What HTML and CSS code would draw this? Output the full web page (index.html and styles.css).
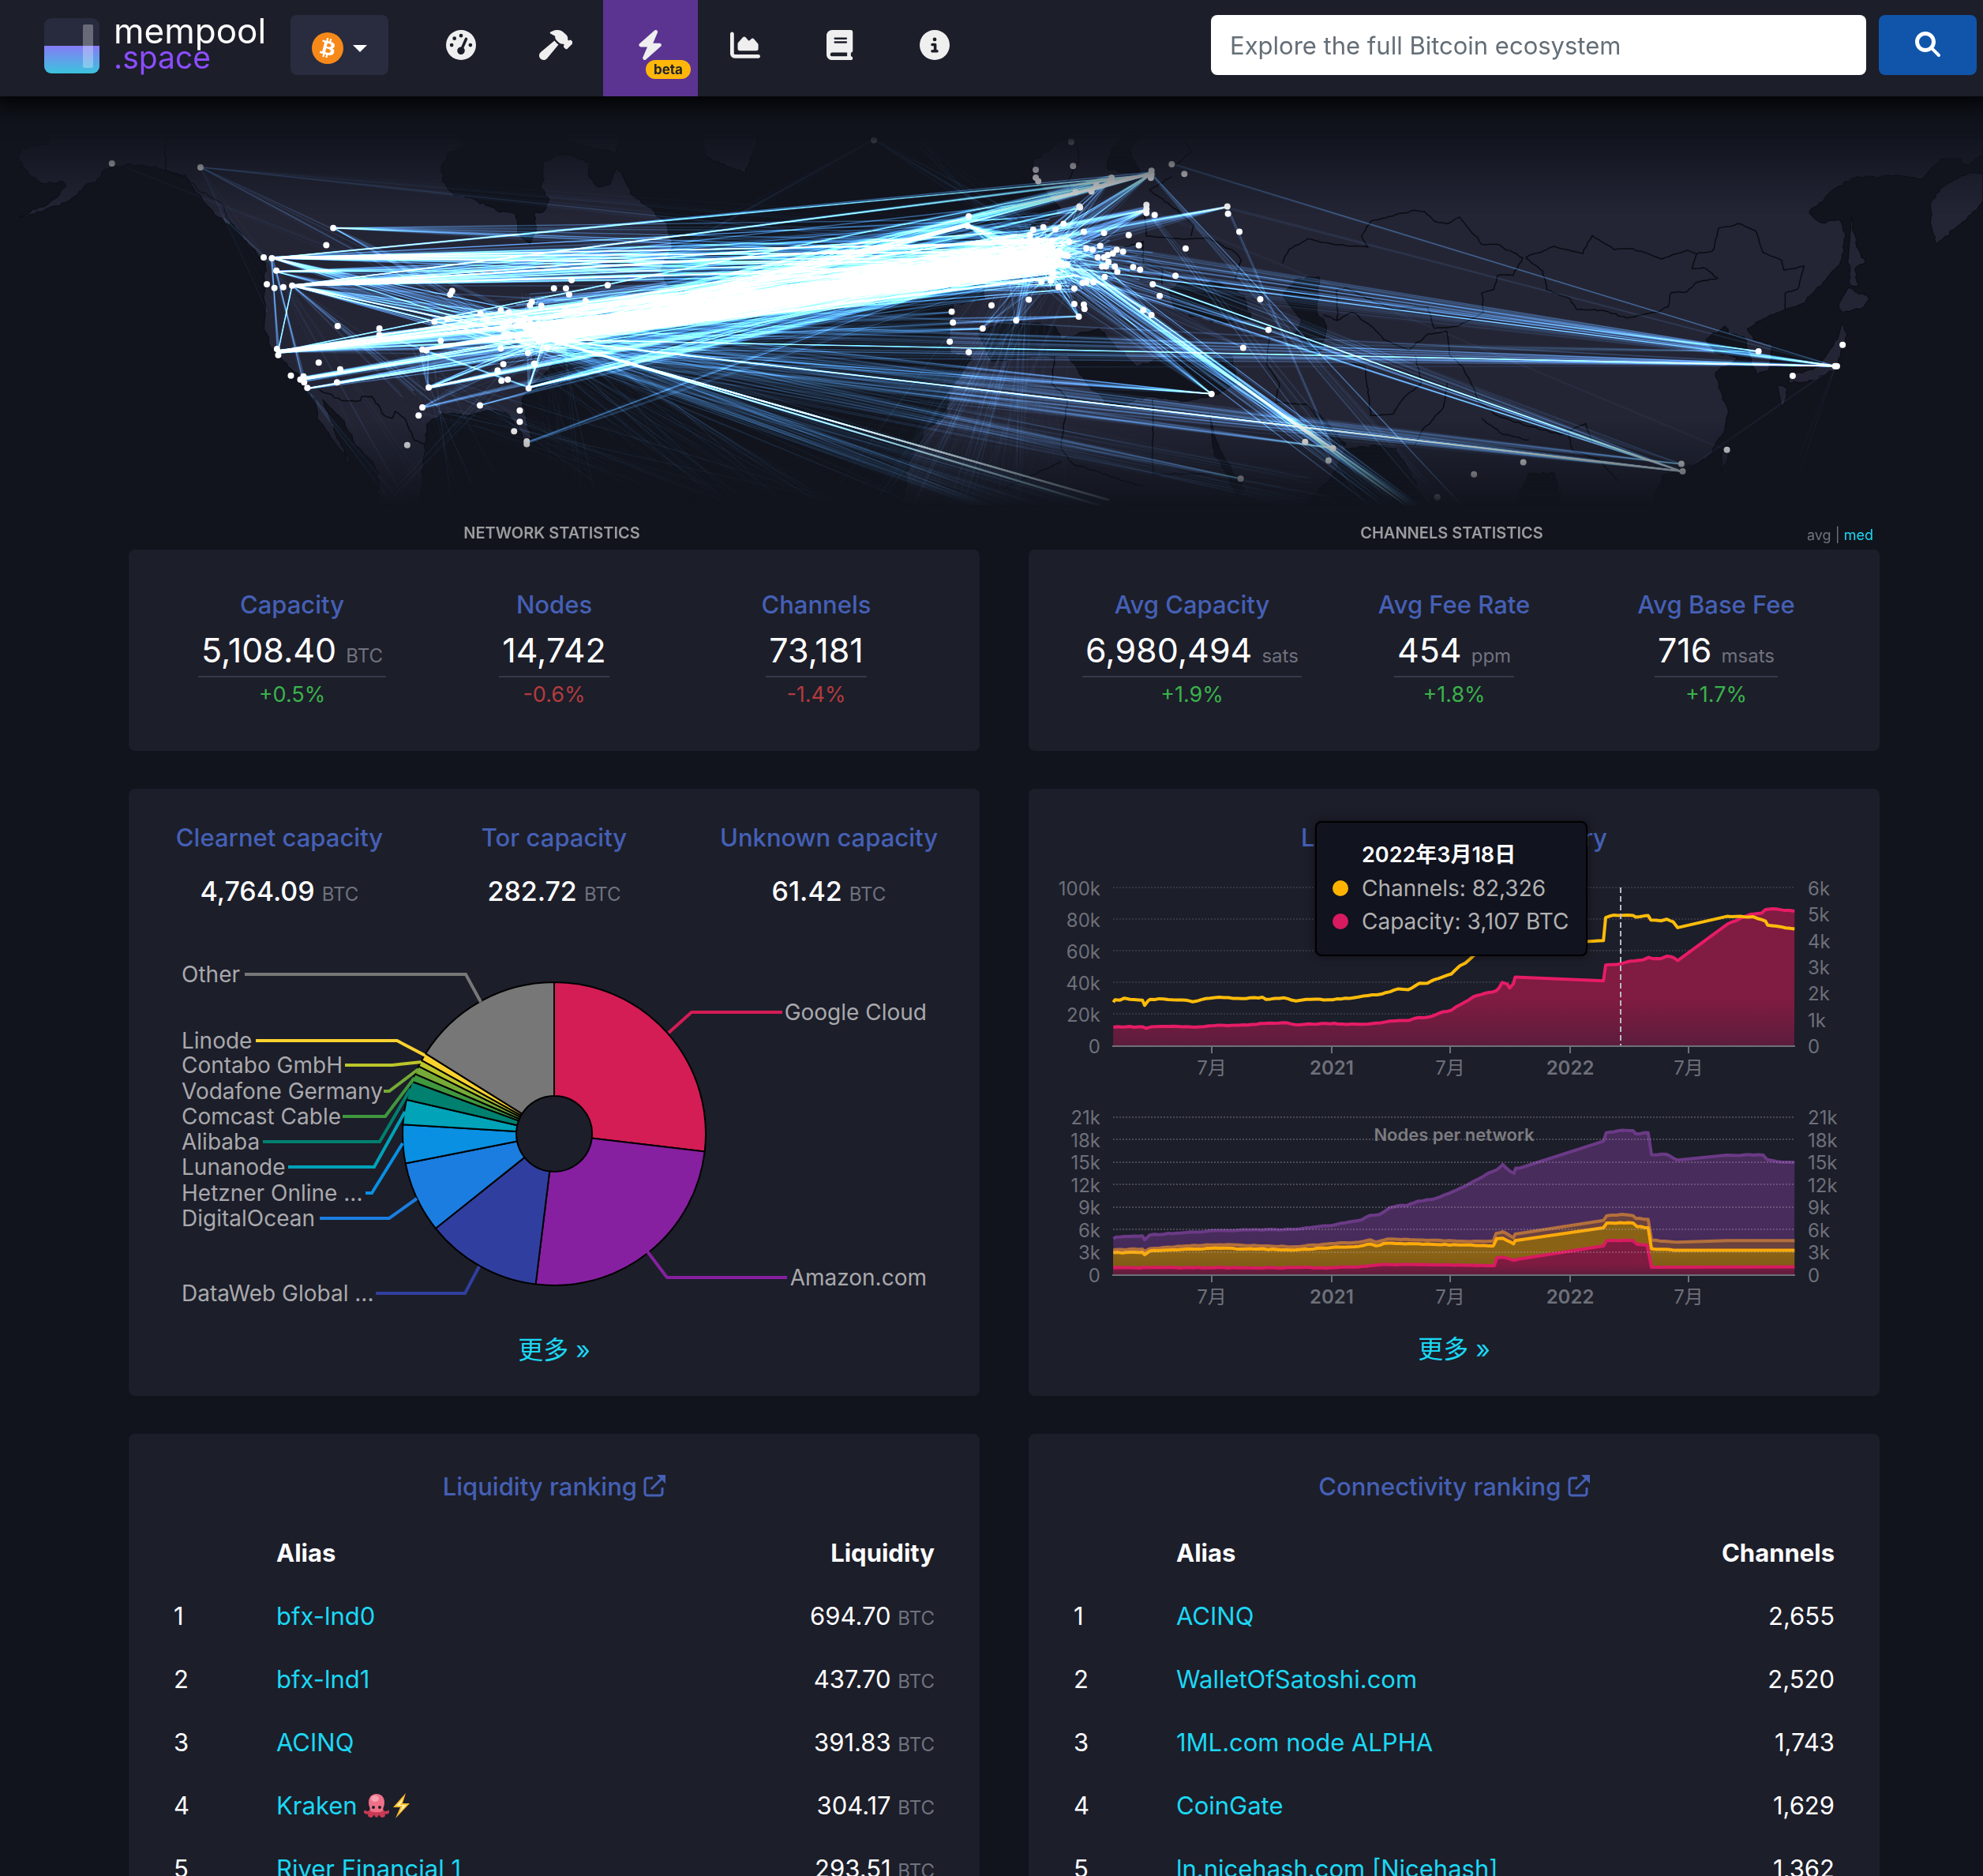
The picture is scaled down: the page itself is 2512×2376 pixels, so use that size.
FILE: index.html
```html
<!DOCTYPE html>
<html lang="zh">
<head>
<meta charset="utf-8">
<title>mempool.space - Lightning</title>
<meta name="viewport" content="width=device-width, initial-scale=1">
<link rel="stylesheet" href="styles.css">
</head>
<body>
<header class="topbar">
  <a class="brand" href="#">
    <svg class="brand-mark" viewBox="0 0 70 70" aria-hidden="true">
      <defs>
        <linearGradient id="fill" x1="0" y1="0" x2="0" y2="1"><stop offset="0" stop-color="#857cf6"/><stop offset="1" stop-color="#3bc4dd"/></linearGradient>
        <clipPath id="round"><rect width="70" height="70" rx="9"/></clipPath>
      </defs>
      <g clip-path="url(#round)">
        <rect width="70" height="70" fill="#272b3d"/>
        <rect y="35" width="70" height="35" fill="url(#fill)"/>
        <rect x="49" y="8" width="13" height="55" rx="2" fill="#fff" opacity=".3"/>
      </g>
    </svg>
    <span class="brand-text"><span>mempool</span><span class="brand-space">.space</span></span>
  </a>
  <button class="network" type="button" aria-label="Network">
    <svg class="coin" viewBox="0 0 64 64" aria-hidden="true"><circle cx="32" cy="32" r="32" fill="#f7891a"/><path fill="#fff" d="M46.11 27.44c.636-4.258-2.606-6.547-7.039-8.074l1.438-5.768-3.512-.875-1.4 5.616c-.922-.23-1.87-.447-2.812-.662l1.41-5.653-3.509-.875-1.439 5.766c-.764-.174-1.514-.346-2.242-.527l.004-.018-4.842-1.209-.934 3.75s2.605.597 2.55.634c1.422.355 1.68 1.296 1.636 2.042l-1.638 6.571c.098.025.225.061.365.117l-.37-.092-2.297 9.205c-.174.432-.615 1.08-1.609.834.035.051-2.552-.637-2.552-.637l-1.743 4.02 4.57 1.139c.85.213 1.683.436 2.502.646l-1.453 5.835 3.507.875 1.44-5.772c.957.26 1.887.5 2.797.726L27.504 50.8l3.511.875 1.453-5.823c5.987 1.133 10.49.676 12.383-4.738 1.527-4.36-.075-6.875-3.225-8.516 2.294-.53 4.022-2.04 4.483-5.157zM38.087 38.69c-1.086 4.36-8.426 2.004-10.807 1.412l1.928-7.729c2.38.594 10.011 1.77 8.88 6.317zm1.085-11.312c-.99 3.966-7.1 1.951-9.083 1.457l1.748-7.01c1.983.494 8.367 1.416 7.335 5.553z"/></svg>
    <span class="caret"></span>
  </button>
  <nav class="menu">
    <a href="#" aria-label="Dashboard"><svg viewBox="0 0 512 512"><path d="M0 256a256 256 0 1 1 512 0A256 256 0 1 1 0 256zM288 96a32 32 0 1 0 -64 0 32 32 0 1 0 64 0zM256 416c35.3 0 64-28.7 64-64c0-17.4-6.9-33.1-18.1-44.6L366 161.7c5.3-12.1-.2-26.3-12.3-31.6s-26.3 .2-31.6 12.3L257.9 288c-.6 0-1.3 0-1.9 0c-35.3 0-64 28.7-64 64s28.7 64 64 64zM176 144a32 32 0 1 0 -64 0 32 32 0 1 0 64 0zM96 288a32 32 0 1 0 0-64 32 32 0 1 0 0 64zm352-32a32 32 0 1 0 -64 0 32 32 0 1 0 64 0z"/></svg></a>
    <a href="#" aria-label="Mining"><svg viewBox="0 0 576 512"><path d="M413.500 237.500c-28.200 4.800-58.200-3.600-80-25.400l-38.100-38.100C280.400 159 272 138.800 272 117.600V105.500L192.300 62c-5.300-2.900-8.600-8.600-8.300-14.700s3.900-11.500 9.500-14l47.200-21C259.100 4.200 279 0 299.200 0h18.100c36.700 0 72 14 98.700 39.100l44.600 42c24.200 22.800 33.200 55.700 26.600 86L503 183l8-8c9.400-9.400 24.600-9.400 33.900 0l24 24c9.400 9.400 9.400 24.600 0 33.900l-88 88c-9.400 9.400-24.600 9.400-33.900 0l-24-24c-9.400-9.400-9.400-24.600 0-33.900l8-8-17.500-17.500zM27.400 377.100L260.900 182.600c3.500 4.900 7.500 9.600 11.800 14l38.100 38.100c6 6 12.400 11.200 19.200 15.700L134.900 484.600c-14.500 17.400-36 27.400-58.600 27.400C34.100 512 0 477.800 0 435.700c0-22.600 10.100-44.100 27.400-58.600z"/></svg></a>
    <a href="#" class="active" aria-label="Lightning"><svg viewBox="0 0 448 512"><path d="M349.400 44.600c5.900-13.700 1.500-29.700-10.600-38.500s-28.600-8-39.900 1.800l-256 224c-10 8.800-13.600 22.900-8.900 35.300S50.700 288 64 288H175.500L98.600 467.400c-5.900 13.700-1.500 29.700 10.600 38.500s28.600 8 39.900-1.800l256-224c10-8.800 13.600-22.900 8.900-35.300s-16.600-20.700-30-20.700H272.500L349.400 44.600z"/></svg><span class="badge">beta</span></a>
    <a href="#" aria-label="Graphs"><svg viewBox="0 0 512 512"><path d="M64 64c0-17.700-14.300-32-32-32S0 46.300 0 64V400c0 44.200 35.800 80 80 80H480c17.700 0 32-14.300 32-32s-14.300-32-32-32H80c-8.800 0-16-7.200-16-16V64zm96 288H448c17.700 0 32-14.300 32-32V251.800c0-7.600-2.700-15-7.700-20.800l-65.800-76.800c-12.100-14.200-33.700-15-46.900-1.800l-21 21c-10 10-26.400 9.200-35.400-1.600l-39.200-47c-12.600-15.100-35.700-15.400-48.700-.6L135.900 215c-5.100 5.800-7.900 13.300-7.900 21.100v84c0 17.700 14.300 32 32 32z"/></svg></a>
    <a href="#" aria-label="Docs"><svg viewBox="0 0 448 512"><path d="M96 0C43 0 0 43 0 96V416c0 53 43 96 96 96H384h32c17.700 0 32-14.300 32-32s-14.300-32-32-32V384c17.700 0 32-14.300 32-32V32c0-17.700-14.300-32-32-32H384 96zm0 384H352v64H96c-17.700 0-32-14.300-32-32s14.300-32 32-32zm32-240c0-8.800 7.200-16 16-16H336c8.800 0 16 7.200 16 16s-7.200 16-16 16H144c-8.800 0-16-7.200-16-16zm16 48H336c8.800 0 16 7.200 16 16s-7.200 16-16 16H144c-8.800 0-16-7.200-16-16s7.200-16 16-16z"/></svg></a>
    <a href="#" aria-label="About"><svg viewBox="0 0 512 512"><path d="M256 512A256 256 0 1 0 256 0a256 256 0 1 0 0 512zM216 336h24V272H216c-13.300 0-24-10.700-24-24s10.700-24 24-24h48c13.300 0 24 10.700 24 24v88h8c13.300 0 24 10.700 24 24s-10.700 24-24 24H216c-13.300 0-24-10.700-24-24s10.700-24 24-24zm40-208a32 32 0 1 1 0 64 32 32 0 1 1 0-64z"/></svg></a>
  </nav>
  <form class="search">
    <input type="text" placeholder="Explore the full Bitcoin ecosystem" aria-label="Explore the full Bitcoin ecosystem">
    <button type="button" aria-label="Search"><svg viewBox="0 0 512 512"><path d="M416 208c0 45.900-14.900 88.300-40 122.700L502.600 457.400c12.500 12.500 12.500 32.800 0 45.300s-32.800 12.500-45.300 0L330.700 376c-34.400 25.200-76.800 40-122.700 40C93.100 416 0 322.900 0 208S93.100 0 208 0S416 93.100 416 208zM208 336a128 128 0 1 0 0-256 128 128 0 1 0 0 256z"/></svg></button>
  </form>
</header>

<canvas class="map" id="map" role="img" aria-label="Lightning channels world map"></canvas>

<main class="dashboard">
  <section class="column-block">
    <div class="caption"><h2>NETWORK STATISTICS</h2></div>
    <div class="card stats">
      <div class="stat"><h3>Capacity</h3><p class="value">5,108.40 <small>BTC</small></p><p class="up">+0.5%</p></div>
      <div class="stat"><h3>Nodes</h3><p class="value">14,742</p><p class="down">-0.6%</p></div>
      <div class="stat"><h3>Channels</h3><p class="value">73,181</p><p class="down">-1.4%</p></div>
    </div>
  </section>
  <section class="column-block">
    <div class="caption"><h2>CHANNELS STATISTICS</h2><span class="toggle">avg | <a href="#">med</a></span></div>
    <div class="card stats">
      <div class="stat"><h3>Avg Capacity</h3><p class="value">6,980,494 <small>sats</small></p><p class="up">+1.9%</p></div>
      <div class="stat"><h3>Avg Fee Rate</h3><p class="value">454 <small>ppm</small></p><p class="up">+1.8%</p></div>
      <div class="stat"><h3>Avg Base Fee</h3><p class="value">716 <small>msats</small></p><p class="up">+1.7%</p></div>
    </div>
  </section>

  <section class="card charts">
    <div class="shares">
      <div class="stat"><h3>Clearnet capacity</h3><p class="amount">4,764.09 <small>BTC</small></p></div>
      <div class="stat"><h3>Tor capacity</h3><p class="amount">282.72 <small>BTC</small></p></div>
      <div class="stat"><h3>Unknown capacity</h3><p class="amount">61.42 <small>BTC</small></p></div>
    </div>
    <svg class="pie" id="pie" viewBox="0 0 1078 524" role="img" aria-label="Capacity per ISP"></svg>
    <a class="more" href="#">更多 »</a>
  </section>

  <section class="card charts">
    <h3>Lightning Network History</h3>
    <svg class="history" id="history" viewBox="0 0 1078 587" role="img" aria-label="Lightning Network History"></svg>
    <a class="more" href="#">更多 »</a>
    <div class="tooltip">
      <strong>2022年3月18日</strong>
      <span class="series"><i class="dot channels"></i>Channels: 82,326</span>
      <span class="series"><i class="dot capacity"></i>Capacity: 3,107 BTC</span>
    </div>
  </section>

  <section class="card ranking">
    <h3><a href="#">Liquidity ranking <svg class="ext" viewBox="0 0 28 28"><path d="M12 4H5a3 3 0 0 0-3 3v16a3 3 0 0 0 3 3h16a3 3 0 0 0 3-3v-7M10 18 25 3" fill="none" stroke="currentColor" stroke-width="3"/><path d="M17 0h11v11z" fill="currentColor"/></svg></a></h3>
    <table>
      <thead><tr><th></th><th>Alias</th><th>Liquidity</th></tr></thead>
      <tbody>
        <tr><td>1</td><td><a href="#">bfx-lnd0</a></td><td>694.70 <small>BTC</small></td></tr>
        <tr><td>2</td><td><a href="#">bfx-lnd1</a></td><td>437.70 <small>BTC</small></td></tr>
        <tr><td>3</td><td><a href="#">ACINQ</a></td><td>391.83 <small>BTC</small></td></tr>
        <tr><td>4</td><td><a href="#">Kraken <svg class="emoji" viewBox="0 0 32 32" role="img" aria-label="octopus"><path fill="#c93a55" d="M8 19c-1 4-3 5-6 3-2-1-3 2-1 4 2 1 4 1 5 0-2 2-1 4 2 5 3 0 4-2 5-4 1 5 5 5 6 0 1 2 2 4 5 4 3-1 4-3 2-5 1 1 3 1 5 0 2-2 1-5-1-4-3 2-5 1-6-3z"/><path fill="#ee7189" d="M16 1c7 0 10 5 10 11 0 5-2 6-2 10 0 3-16 3-16 0 0-4-2-5-2-10C6 6 9 1 16 1z"/><ellipse cx="14" cy="7" rx="5" ry="4" fill="#f7a0b0"/><circle cx="12" cy="18" r="2" fill="#222"/><circle cx="20" cy="18" r="2" fill="#222"/></svg><svg class="emoji" viewBox="0 0 32 32" role="img" aria-label="bolt"><path fill="#fdb92e" d="M21 0 5 18h9L8 32l18-19h-9z"/><path fill="#fff1a8" d="M18 6 9 16h8l-4 9 9-10h-8z"/></svg></a></td><td>304.17 <small>BTC</small></td></tr>
        <tr><td>5</td><td><a href="#">River Financial 1</a></td><td>293.51 <small>BTC</small></td></tr>
      </tbody>
    </table>
  </section>

  <section class="card ranking">
    <h3><a href="#">Connectivity ranking <svg class="ext" viewBox="0 0 28 28"><path d="M12 4H5a3 3 0 0 0-3 3v16a3 3 0 0 0 3 3h16a3 3 0 0 0 3-3v-7M10 18 25 3" fill="none" stroke="currentColor" stroke-width="3"/><path d="M17 0h11v11z" fill="currentColor"/></svg></a></h3>
    <table>
      <thead><tr><th></th><th>Alias</th><th>Channels</th></tr></thead>
      <tbody>
        <tr><td>1</td><td><a href="#">ACINQ</a></td><td>2,655</td></tr>
        <tr><td>2</td><td><a href="#">WalletOfSatoshi.com</a></td><td>2,520</td></tr>
        <tr><td>3</td><td><a href="#">1ML.com node ALPHA</a></td><td>1,743</td></tr>
        <tr><td>4</td><td><a href="#">CoinGate</a></td><td>1,629</td></tr>
        <tr><td>5</td><td><a href="#">ln.nicehash.com [Nicehash]</a></td><td>1,362</td></tr>
      </tbody>
    </table>
  </section>
</main>
<script src="script.js"></script>
</body>
</html>
```
FILE: styles.css
```css
* { box-sizing: border-box; }

html { background: #11131f; }

body {
  margin: 0;
  background: #11141d;
  color: #fff;
  font-family: Inter, "Noto Sans CJK SC", sans-serif;
  font-size: 31px;
  line-height: 40px;
  overflow-x: hidden;
}

a { color: #1bd8f4; text-decoration: none; }
h2, h3, p { margin: 0; font-weight: 500; }
small { font-size: 24px; line-height: 24px; color: #70727e; font-weight: 400; }

/* top bar */
.topbar {
  position: relative;
  z-index: 1;
  display: flex;
  align-items: center;
  height: 122px;
  padding: 0 8px 0 56px;
  background: #1c1e2a;
  box-shadow: 0 0 30px 10px #000;
}
.brand { display: flex; align-items: center; gap: 18px; width: 312px; padding-bottom: 7px; color: #fff; }
.brand-mark { width: 70px; height: 70px; }
.brand-text { display: flex; flex-direction: column; font-size: 44px; line-height: 34px; padding-bottom: 4px; }
.brand-space { color: #8c4dff; font-size: 39px; }
.network {
  display: flex;
  align-items: center;
  justify-content: center;
  gap: 12px;
  width: 124px;
  height: 76px;
  margin-bottom: 8px;
  padding: 8px 0 0;
  border: 0;
  border-radius: 8px;
  background: #282c3e;
}
.coin { width: 40px; height: 40px; }
.caret { border: 9px solid transparent; border-top-color: #fff; border-bottom: 0; }
.menu { display: flex; align-self: stretch; margin-left: 32px; }
.menu a {
  position: relative;
  display: flex;
  align-items: center;
  justify-content: center;
  width: 120px;
  padding-bottom: 8px;
}
.menu svg { height: 38px; fill: #efefef; }
.menu .active { background: #5b3492; }
.badge {
  position: absolute;
  right: 9px;
  bottom: 22px;
  padding: 0 10px;
  border-radius: 12px;
  background: #ffb70a;
  color: #212529;
  font-size: 17px;
  font-weight: 700;
  line-height: 24px;
}
.search { display: flex; gap: 16px; margin: 0 0 8px auto; }
.search input {
  width: 830px;
  height: 76px;
  padding: 0 24px;
  border: 0;
  border-radius: 8px;
  background: #fff;
  font: inherit;
}
.search input::placeholder { color: #646e77; opacity: 1; }
.search button {
  width: 124px;
  border: 0;
  border-radius: 8px;
  background: #1155ab;
}
.search button svg { width: 32px; height: 32px; fill: #fff; }

/* channel map */
.map {
  display: block;
  width: 100%;
  height: 536px;
  -webkit-mask-image: linear-gradient(transparent 44px, #000 150px, #000 410px, transparent 520px);
  mask-image: linear-gradient(transparent 44px, #000 150px, #000 410px, transparent 520px);
}

/* cards */
.dashboard {
  display: grid;
  grid-template-columns: 1fr 1fr;
  gap: 48px 62px;
  padding: 0 131px 0 163px;
}
.card {
  border-radius: 8px;
  background: #1c1e2a;
}
.caption {
  position: relative;
  display: flex;
  align-items: center;
  justify-content: center;
  height: 38px;
  padding: 0 6px 4px 0;
}
.caption h2 { font-size: 20px; font-weight: 600; color: #9c9c9f; }
.toggle { position: absolute; right: 8px; bottom: -2px; font-size: 18px; color: #70727e; }

h3 { font-size: 31px; line-height: 40px; color: #4560b5; }
.stats {
  display: grid;
  grid-template-columns: repeat(3, 1fr);
  padding: 50px 41px 53px;
}
.stat { display: flex; flex-direction: column; align-items: center; }
.value {
  margin-top: 10px;
  padding: 0 4px 5px;
  border-bottom: 2px solid #373a48;
  font-size: 43px;
  font-weight: 400;
  line-height: 55px;
}
.up, .down { margin-top: 4px; font-size: 27px; font-weight: 400; line-height: 36px; }
.up { color: #3bb24a; }
.down { color: #b33b3d; }

.charts { position: relative; display: flex; flex-direction: column; padding: 42px 0 38px; text-align: center; }
.shares { display: grid; grid-template-columns: repeat(3, 1fr); padding: 0 17px; }
.amount { margin-top: 26px; font-size: 34px; line-height: 44px; }
.pie { display: block; width: 100%; margin-top: 10px; }
.history { display: block; width: 100%; margin-top: 16px; }
.more { margin-top: 5px; font-size: 32px; }
.pie text { fill: #a9a9ac; font-size: 28px; dominant-baseline: central; }
.history text { fill: #6e7079; font-size: 24px; dominant-baseline: central; }
.history .year { font-weight: 600; }
.history .subtitle { fill: #7c7c80; font-size: 22px; font-weight: 600; }
.tooltip {
  position: absolute;
  top: 41px;
  left: 363px;
  display: flex;
  flex-direction: column;
  padding: 20px 22px 21px 20px;
  border: 2px solid #000;
  border-radius: 8px;
  background: #11131f;
  box-shadow: 0 0 12px rgba(0, 0, 0, .5);
  color: #b1b1b1;
  font-size: 28px;
  line-height: 42px;
  text-align: left;
}
.tooltip strong { padding-left: 37px; color: #fff; font-size: 27px; font-weight: 600; }
.series { display: flex; align-items: center; gap: 17px; white-space: nowrap; }
.dot { width: 20px; height: 20px; border-radius: 50%; }
.dot.channels { background: #ffb300; }
.dot.capacity { background: #d81b60; }

/* rankings */
.ranking { padding: 47px 57px 60px; text-align: center; }
.ranking h3 a { color: inherit; }
.ext { width: 28px; height: 28px; vertical-align: -2px; }
.ranking table { width: 100%; margin-top: 24px; border-collapse: collapse; table-layout: fixed; }
.ranking th, .ranking td { height: 80px; padding: 0; text-align: left; }
.ranking th:first-child { width: 130px; }
.ranking th { font-weight: 700; }
.ranking th:last-child, .ranking td:last-child { text-align: right; }
.emoji { width: 32px; height: 32px; vertical-align: -5px; }
```
FILE: script.js
```js
/* ---------- channel map ---------- */
(function () {
  // World units: 3136 wide, 1568 tall, stretched over the canvas.
  var W = 3136, H = 1568, R = 1568;
  var canvas = document.getElementById('map');
  var w = canvas.clientWidth, h = canvas.clientHeight;
  canvas.width = w;
  canvas.height = h;
  var ctx = canvas.getContext('2d');
  var px = function (x) { return x * w / W; };
  var py = function (y) { return (y - 6) * 540 / H; };

  var seed = 7;
  function rnd() { seed = (seed * 16807) % 2147483647; return seed / 2147483647; }
  function gauss() { return (rnd() + rnd() + rnd() - 1.5) / 1.5; }

  // Breaks each edge into short uneven segments so that coasts look natural.
  function trace(pts, off, rough) {
    ctx.beginPath();
    pts.forEach(function (p, i) {
      if (!i) { ctx.moveTo(px(p[0] + off), py(p[1])); return; }
      var q = pts[i - 1], d = Math.hypot(p[0] - q[0], (p[1] - q[1]) / 2.3);
      var n = Math.max(1, Math.min(30, Math.round(d / 6)));
      for (var k = 1; k <= n; k++) {
        var t = k / n, j = k === n ? 0 : rough;
        ctx.lineTo(px(q[0] + (p[0] - q[0]) * t + off + gauss() * j), py(q[1] + (p[1] - q[1]) * t + gauss() * j * 2.3));
      }
    });
  }
  function shape(pts, off, color) {
    trace(pts, off, 4);
    ctx.closePath();
    ctx.fillStyle = color;
    ctx.fill();
    ctx.strokeStyle = '#0b0d14';
    ctx.lineWidth = 1;
    ctx.stroke();
  }
  var LAND = '#232535', SEA = '#11141d';

  shape([[75,100],[75,180],[35,200],[30,240],[45,290],[65,325],[100,320],[105,335],[85,385],[75,405],[30,450],[70,425],[105,395],[125,355],[160,300],[165,275],[200,255],[240,265],[265,280],[290,300],[310,345],[325,390],[345,440],[370,480],[385,530],[405,580],[420,620],[418,700],[420,780],[418,850],[425,900],[440,960],[465,1020],[487,1070],[500,1140],[505,1200],[530,1280],[555,1365],[545,1310],[530,1240],[520,1180],[510,1120],[540,1190],[560,1280],[590,1350],[600,1420],[600,1520],[665,1520],[668,1400],[672,1280],[675,1210],[700,1170],[740,1180],[770,1160],[800,1170],[820,1220],[830,1270],[840,1260],[832,1200],[825,1120],[840,1080],[870,1000],[900,950],[890,900],[920,860],[950,830],[1000,780],[1060,720],[1045,640],[1063,560],[1055,480],[1035,430],[1000,370],[985,300],[975,270],[965,330],[945,340],[930,290],[935,250],[905,225],[880,220],[860,250],[858,300],[855,340],[868,380],[860,430],[845,440],[848,500],[838,550],[822,520],[815,440],[785,425],[750,385],[718,370],[700,320],[698,270],[710,210],[735,190],[715,100]], 0, LAND);
  shape([[1105,100],[1115,220],[1140,255],[1180,290],[1190,220],[1205,100]], 0, LAND);
  shape([[880,120],[980,120],[975,210],[940,200],[900,170]], 0, LAND);
  shape([[290,290],[320,360],[350,400],[365,480],[345,450],[325,400],[305,340]], 0, LAND);
  shape([[65,300],[65,240],[95,200],[150,100],[1568,100],[1568,220],[1545,260],[1527,235],[1500,235],[1470,310],[1430,295],[1365,305],[1330,350],[1293,435],[1310,470],[1340,460],[1350,510],[1345,600],[1320,680],[1280,770],[1255,790],[1225,820],[1195,860],[1205,900],[1235,920],[1230,1010],[1210,1030],[1200,960],[1190,890],[1165,880],[1160,850],[1130,900],[1145,950],[1180,970],[1145,1020],[1150,1080],[1165,1160],[1160,1230],[1130,1340],[1060,1400],[1040,1550],[-145,1550],[-128,1340],[-103,1230],[-70,1180],[-68,1100],[-30,970],[-65,950],[-66,880],[-60,770],[-10,750],[-10,680],[-70,600],[-20,540],[60,500],[110,420]], R, LAND);
  shape([[225,120],[190,200],[182,270],[210,285],[235,285],[218,200],[250,120]], R, SEA);
  shape([[-20,880],[20,830],[100,850],[110,900],[170,860],[230,1000],[280,960],[380,960],[390,1060],[350,1110],[300,1130],[250,1110],[190,1150],[150,1060],[120,960],[60,965],[0,980]], R, SEA);
  shape([[280,720],[300,690],[335,700],[350,680],[400,740],[410,820],[370,840],[320,815],[290,790]], R, SEA);
  shape([[460,740],[480,680],[518,670],[515,800],[530,850],[525,930],[510,965],[480,880],[490,830]], R, SEA);
  shape([[345,1170],[360,1300],[400,1450],[390,1480],[350,1300]], R, SEA);
  shape([[480,1550],[540,1400],[560,1300],[600,1290],[640,1300],[660,1380],[700,1550]], R, SEA);
  shape([[820,1550],[850,1390],[890,1390],[905,1550]], R, SEA);
  shape([[500,1140],[530,1200],[560,1290],[545,1290]], R, SEA);
  shape([[1568,390],[1550,440],[1530,480],[1495,550],[1485,470],[1485,400],[1500,345],[1545,290],[1568,290]], R, LAND);
  shape([[1360,450],[1368,560],[1382,620],[1365,640],[1372,700],[1358,700],[1355,600]], R, LAND);
  shape([[1355,710],[1388,750],[1380,780],[1345,800],[1340,770]], R, LAND);
  shape([[1345,840],[1353,880],[1340,970],[1335,1010],[1300,1050],[1260,1060],[1265,1030],[1310,1000],[1325,940],[1338,900]], R, LAND);
  shape([[1243,1070],[1258,1080],[1250,1150]], R, LAND);
  shape([[1155,1310],[1165,1320],[1155,1390]], R, LAND);

  // borders
  [[[460,620],[470,570],[500,530],[540,550],[595,560],[585,520],[600,465],[670,425],[685,430],[700,465],[720,475],[740,450],[775,550],[800,550],[840,600],[825,665],[800,665],[795,715],[775,730],[778,800],[740,850],[700,860],[690,780],[640,790],[605,760],[560,710],[545,720],[548,830],[525,810]],
   [[845,600],[890,558],[935,585],[950,518],[985,570],[1015,567],[1060,605],[1100,572],[1115,585],[1108,640],[1130,640],[1148,675],[1115,690],[1100,725],[1075,728],[1070,780],[1050,800],[1005,822],[970,795],[925,790],[915,750],[878,718],[872,650],[845,600]],
   [[1115,585],[1140,575],[1150,490],[1185,475],[1208,500],[1220,580],[1250,610],[1253,645],[1285,630],[1275,715],[1255,730],[1255,790]],
   [[660,940],[690,880],[720,870],[725,960],[745,1000],[765,1090],[770,1130],[800,1180],[850,1220],[900,1250],[940,1210],[950,1280]],
   [[775,1190],[810,1250],[850,1270]], [[910,1230],[920,1310],[960,1340],[990,1420]],
   [[440,890],[435,990],[455,1060],[450,1130],[500,1140]],
   [[520,960],[590,1000],[600,1180],[635,1175],[650,1120],[680,1060],[670,960]],
   [[545,830],[570,800],[600,850],[620,900],[660,940]], [[720,1060],[715,1150],[680,1240],[670,1290]],
   [[100,960],[95,1060],[120,1120],[110,1300],[130,1360],[240,1440]],
   [[255,1120],[255,1395],[350,1395]], [[110,1350],[20,1450]],
   [[240,400],[245,520],[300,530],[345,530],[380,570],[395,610],[385,680]],
   [[285,300],[250,350],[280,400],[320,480],[315,520]], [[305,170],[316,210],[290,260]], [[135,170],[138,250],[120,320],[125,350]],
   [[210,560],[240,540],[240,620],[270,640],[270,700]]
  ].forEach(function (b) { border(b, R); });
  [[[505,1085],[540,1125],[570,1125],[572,1110],[588,1110],[608,1180],[620,1190],[625,1165],[640,1190],[655,1270],[670,1285]],
   [[262,150],[262,280],[290,300]]].forEach(function (b) { border(b, 0); });
  function border(b, off) {
    trace(b, off, 2);
    ctx.strokeStyle = '#0a0c12';
    ctx.lineWidth = 1.5;
    ctx.stroke();
  }

  // channels: [x1, y1, x2, y2, count, opacity, spread at start, spread at end]
  var EU = R + 80;
  var groups = [
    [865,890, EU,610, 360,.18, 26,60], [830,870, EU,590, 80,.14, 70,75], [868,900, EU+30,650, 130,.16, 10,60],
    [865,890, EU-10,570, 90,.16, 26,60], [790,840, EU,560, 40,.14, 90,90],
    [430,600, EU,600, 80,.22, 3,90], [430,600, EU,540, 40,.24, 3,100], [437,650, EU,600, 40,.18, 2,110],
    [462,702, EU,590, 90,.26, 3,100], [462,702, EU,500, 34,.24, 3,110], [440,945, EU,600, 140,.24, 5,100],
    [440,945, 865,880, 60,.22, 5,70], [480,1045, EU,600, 60,.2, 8,80], [487,1080, EU,620, 24,.2, 3,80],
    [533,1058, EU,600, 18,.2, 3,80], [678,1077, EU,600, 50,.22, 4,80], [836,1077, EU,600, 40,.22, 3,80],
    [668,1150, 860,900, 12,.13, 4,50], [668,1150, EU,600, 14,.12, 4,70], [760,1142, EU,600, 12,.12, 3,70],
    [833,1280, EU,600, 14,.12, 4,70], [600,880, EU,600, 18,.18, 4,60], [687,835, EU,590, 34,.2, 14,60],
    [670,937, EU,600, 80,.2, 6,80], [860,890, 1530,480, 60,.2, 60,8], [845,770, EU,560, 60,.14, 40,80],
    [900,820, EU,600, 50,.14, 40,80], [527,490, EU,560, 36,.14, 2,120], [317,267, EU,560, 12,.07, 1,90],
    [317,267, 820,860, 8,.07, 1,70], [317,267, 437,800, 5,.06, 1,50],
    [527,490, 840,860, 12,.13, 2,50], [430,600, 840,870, 36,.22, 3,80], [462,702, 850,890, 46,.28, 3,80],
    [437,650, 850,890, 18,.18, 3,80], [430,600, 440,945, 10,.12, 3,3], [462,702, 440,945, 8,.2, 3,3],
    [430,600, 480,1050, 8,.13, 3,4], [462,702, 668,1090, 12,.14, 2,50], [437,650, 480,1050, 8,.1, 3,10],
    [865,900, 678,1077, 18,.2, 20,4], [865,900, 836,1077, 14,.22, 20,3], [845,770, 836,1077, 10,.15, 50,3],
    [670,937, 678,1077, 8,.14, 10,4], [600,880, 836,1077, 8,.12, 5,3], [670,937, 836,1077, 8,.14, 8,3],
    [860,870, R+253,290, 60,.18, 70,5], [462,702, R+253,295, 16,.22, 2,8], [430,600, R+253,290, 14,.18, 2,8],
    [440,945, R+253,290, 14,.18, 2,8], [900,840, R+190,305, 26,.14, 60,8],
    [860,880, R+245,420, 34,.15, 60,10], [860,880, R+373,412, 22,.1, 50,3], [860,880, R+138,415, 26,.16, 60,8],
    [EU,580, R+253,290, 36,.2, 60,3], [EU,580, R+245,425, 40,.18, 60,4], [EU,580, R+373,412, 22,.13, 60,3],
    [EU,590, R+190,305, 18,.18, 60,3], [EU,590, R+138,410, 16,.18, 60,3], [EU,590, 1530,480, 60,.24, 70,6],
    [EU+30,590, R+200,600, 60,.18, 60,70], [EU,600, R+160,690, 60,.18, 60,40], [EU,600, R+100,690, 50,.2, 70,50],
    [EU,580, R+150,560, 50,.16, 60,60], [EU,560, R+60,510, 50,.2, 70,50],
    [1382,165, EU,560, 10,.06, 2,60], [1382,165, 840,860, 8,.05, 2,100], [1440,150, EU,600, 8,.06, 10,90],
    [865,900, R+1335,998, 90,.05, 90,2], [865,900, R,933, 8,.26, 2,1], [R,933, R+1335,998, 8,.26, 1,2],
    [865,900, R+1213,945, 20,.04, 60,2], [EU+30,600, R+1335,998, 36,.14, 80,2], [EU+60,590, R+1213,945, 26,.12, 70,2],
    [R+285,255, R+1335,998, 5,.09, 3,2], [462,702, R+1335,998, 8,.05, 2,2], [R+380,420, R+1335,998, 6,.04, 6,2],
    [865,900, R+1091,1385, 70,.06, 100,2], [865,900, R+1093,1385, 9,.38, 2,2], [865,900, R+1091,1358, 36,.06, 70,2],
    [EU+40,620, R+1091,1385, 16,.12, 70,2], [R+255,697, R+1091,1385, 8,.28, 2,2], [EU,560, R+1091,1358, 12,.06, 80,2],
    [865,900, R+163,1640, 50,.09, 60,50], [865,900, R+185,1490, 16,.6, 3,3], [865,900, R+185,1520, 8,.3, 3,3],
    [865,900, R+300,1640, 40,.08, 60,80],
    [865,900, R-200,1740, 40,.06, 100,300], [700,1100, R-200,1740, 24,.05, 100,260], [865,900, R+500,1460, 36,.06, 100,80],
    [865,900, R+348,1100, 40,.09, 90,2], [EU,600, R+348,1100, 22,.14, 80,2], [865,900, R+395,1412, 20,.09, 60,2],
    [EU+30,640, R+540,1300, 22,.14, 60,3], [EU+70,660, R+670,1520, 30,.34, 40,24], [EU+40,620, R+640,1520, 24,.14, 60,40],
    [R+253,290, R+720,1540, 12,.1, 3,40], [R+245,420, R+640,1540, 6,.1, 3,60], [R+200,600, R+1091,1385, 8,.09, 40,3],
    [EU,600, R-160,1740, 34,.05, 90,200], [EU,600, R-280,1840, 26,.04, 90,260], [EU,590, R+40,1740, 20,.05, 90,200],
    [865,900, 950,1800, 14,.06, 60,120], [670,940, 780,1700, 10,.05, 60,120], [485,1080, 700,1700, 6,.09, 5,60],
    [430,620, 650,1500, 6,.04, 5,50], [860,900, 620,1500, 5,.05, 60,40], [200,270, 850,900, 3,.04, 5,50],
    [430,620, 350,450, 4,.04, 5,20], [R+373,412, R+540,1300, 5,.08, 3,3],
    [EU,590, R+40,830, 18,.13, 80,3], [EU,600, R+138,815, 20,.14, 70,3], [865,900, R+138,815, 24,.1, 70,3],
    [865,900, 1505,800, 14,.1, 80,3], [865,900, 1553,860, 18,.14, 60,3], [EU,600, 1553,860, 14,.12, 80,3],
    [865,900, R+540,1300, 30,.06, 60,3], [R+1335,998, R+1093,1385, 5,.03, 3,3], [R+1335,998, R+1250,1568, 4,.03, 3,60],
    [R+245,420, R+1160,1305, 3,.05, 5,2], [EU+60,640, R+438,865, 14,.12, 60,3], [EU+60,640, R+253,800, 22,.14, 60,8],
    [EU,600, R+398,930, 8,.09, 60,2], [R+425,752, R+1335,998, 6,.06, 40,2], [R+438,865, R+1091,1385, 6,.08, 5,3]
  ];
  // Endpoints sit in a limited set of towns, the first ones hosting most nodes.
  var towns = [];
  for (var t = 0; t < 34; t++) towns.push([gauss(), gauss()]);
  function town() { return towns[Math.floor(Math.pow(rnd(), 1.3) * towns.length)]; }
  ctx.globalCompositeOperation = 'lighter';
  ctx.lineWidth = 1.3;
  groups.forEach(function (g) {
    for (var i = 0; i < g[4]; i++) {
      var a = town(), b = town();
      var alpha = Math.min(1, g[5] * (0.45 + Math.pow(rnd(), 4) * 2.8));
      ctx.strokeStyle = 'rgba(70,140,215,' + alpha.toFixed(3) + ')';
      ctx.beginPath();
      ctx.moveTo(px(g[0] + a[0] * g[6]), py(g[1] + a[1] * g[6] * 1.5));
      ctx.lineTo(px(g[2] + b[0] * g[7]), py(g[3] + b[1] * g[7] * 1.5));
      ctx.stroke();
    }
  });

  // nodes
  ctx.globalCompositeOperation = 'source-over';
  ctx.fillStyle = '#fff';
  function node(x, y) {
    ctx.beginPath();
    ctx.arc(px(x), py(y), 4, 0, 7);
    ctx.fill();
  }
  [[177,253],[317,267],[527,490],[516,553],[417,598],[430,601],[437,647],[422,697],[434,711],[448,708],[462,702],[534,851],[600,860],[600,884],[438,935],[440,958],[504,985],[538,1010],[533,1058],[460,1033],[475,1048],[480,1036],[481,1058],[486,1078],[715,722],[712,735],[904,682],[876,712],[895,712],[961,701],[900,735],[926,758],[841,762],[856,776],[838,775],[760,805],[792,793],[805,800],[894,790],[917,795],[687,835],[707,825],[668,937],[674,940],[697,905],[770,825],[820,830],[835,950],[792,933],[865,930],[845,989],[796,991],[787,1014],[793,1052],[803,1048],[678,1077],[836,1080],[668,1150],[662,1180],[759,1143],[822,1162],[822,1203],[813,1238],[833,1275],[833,1285],[644,1289],[1382,167],[1532,447],[1530,482],[1505,798],[1507,838],[1554,860],[1502,908],[1532,947]].forEach(function (p) { node(p[0], p[1]); });
  [[126,174],[129,262],[70,276],[70,305],[74,318],[285,256],[305,291],[253,280],[253,292],[252,306],[190,305],[190,315],[166,332],[158,356],[133,358],[139,411],[140,415],[245,405],[245,420],[245,435],[258,442],[373,411],[374,438],[392,504],[307,566],[217,516],[178,508],[146,504],[114,475],[101,495],[82,487],[66,497],[233,554],[208,577],[198,570],[172,556],[160,570],[150,565],[192,584],[184,590],[178,598],[168,598],[185,615],[175,632],[181,632],[195,632],[199,651],[224,634],[235,643],[291,666],[179,670],[161,690],[150,690],[144,692],[131,713],[106,708],[94,685],[79,688],[255,697],[266,740],[425,752],[59,754],[131,770],[146,772],[147,788],[0,775],[240,792],[253,810],[138,816],[39,830],[438,865],[398,931],[348,1101],[496,1277],[540,1300],[533,1345],[394,1412],[841,1352],[763,1396],[705,1480],[1346,920],[1213,944],[1334,998],[1337,998],[1267,1034],[1163,1306],[1091,1358],[1093,1385]].forEach(function (p) { node(p[0] + R, p[1]); });
  for (var i = 0; i < 70; i++) node(EU + 5 + gauss() * 55, 600 + gauss() * 95);
  for (i = 0; i < 26; i++) node(838 + gauss() * 70, 860 + gauss() * 80);
})();

/* ---------- svg helpers ---------- */
function add(parent, tag, attrs, text) {
  var el = document.createElementNS('http://www.w3.org/2000/svg', tag);
  for (var k in attrs) el.setAttribute(k, attrs[k]);
  if (text !== undefined) el.textContent = text;
  parent.appendChild(el);
  return el;
}

/* ---------- pie ---------- */
(function () {
  var svg = document.getElementById('pie');
  var cx = 539, cy = 275, R = 192, r = 48;
  function pt(a, d) {
    a = a * Math.PI / 180;
    return (cx + Math.sin(a) * d).toFixed(1) + ' ' + (cy - Math.cos(a) * d).toFixed(1);
  }
  // name, start angle, end angle, colour, leader points, label x, label y, anchor
  [
    ['Google Cloud', 0, 96.7, '#d41c55', '828,121 713,121 684,147', 1011, 121, 'end'],
    ['Amazon.com', 96.7, 187, '#8620a0', '834,457 682,457 657,424', 1011, 457, 'end'],
    ['DataWeb Global ...', 187, 231.4, '#303f9f', '313,477 426,477 444,443', 67, 477, 'start'],
    ['DigitalOcean', 231.4, 258.7, '#1b7de0', '242,382 330,382 365,357', 67, 382, 'start'],
    ['Hetzner Online ...', 258.7, 273.5, '#0990e3', '300,350 308,350 347,287', 67, 350, 'start'],
    ['Lunanode', 273.5, 283, '#00a3b8', '202,317 311,317 350,247', 67, 317, 'start'],
    ['Alibaba', 283, 290.2, '#00806f', '170,285 318,285 357,218', 67, 285, 'start'],
    ['Comcast Cable', 290.2, 293.3, '#3f973e', '271,253 325,253 362,204', 67, 253, 'start'],
    ['Vodafone Germany', 293.3, 296.5, '#75aa36', '323,221 330,221 367,193', 67, 221, 'start'],
    ['Contabo GmbH', 296.5, 299, '#bcc52a', '274,188 334,188 371,184', 67, 188, 'start'],
    ['Linode', 299, 302, '#fdd22f', '161,157 340,157 376,176', 67, 157, 'start'],
    ['Other', 302, 360, '#777777', '147,73 427,73 446,108', 67, 73, 'start']
  ].forEach(function (s) {
    add(svg, 'path', {
      d: 'M' + pt(s[1], R) + 'A' + R + ' ' + R + ' 0 0 1 ' + pt(s[2], R) + 'L' + pt(s[2], r) + 'A' + r + ' ' + r + ' 0 0 0 ' + pt(s[1], r) + 'Z',
      fill: s[3], stroke: '#000', 'stroke-width': 2, 'stroke-linejoin': 'bevel'
    });
    add(svg, 'polyline', { points: s[4], fill: 'none', stroke: s[3], 'stroke-width': 4 });
    add(svg, 'text', { x: s[5], y: s[6], 'text-anchor': s[7] }, s[0]);
  });
})();

/* ---------- history ---------- */
(function () {
  var svg = document.getElementById('history');
  var L = 107, Rt = 970;
  // Series samples are kept on a 1568-unit square grid.
  function X(v) { return (v * 0.7079 - 13).toFixed(1); }
  function Y(v) { return (v * 0.5102 - 116).toFixed(1); }
  function parse(s) {
    return s.split(' ').map(function (p) { return p.split(',').map(Number); });
  }
  function path(pts) { return pts.map(function (p) { return X(p[0]) + ' ' + Y(p[1]); }).join('L'); }
  // Adds small day-to-day noise between samples.
  var seed = 11;
  function rnd() { seed = (seed * 16807) % 2147483647; return seed / 2147483647; }
  function noisy(pts) {
    var out = [pts[0]];
    for (var i = 1; i < pts.length; i++) {
      var a = pts[i - 1], b = pts[i], n = Math.round((b[0] - a[0]) / 8);
      var straight = b[0] - a[0] > 70 && a[0] > 880;
      for (var k = 1; k < n && !straight; k++) {
        out.push([a[0] + (b[0] - a[0]) * k / n, a[1] + (b[1] - a[1]) * k / n + (rnd() - .5) * 2]);
      }
      out.push(b);
    }
    return out;
  }
  function area(pts, base, fill) {
    add(svg, 'path', { d: 'M' + path(pts) + 'L' + Rt + ' ' + base + 'L' + L + ' ' + base + 'Z', fill: fill });
  }
  function line(pts, color) {
    add(svg, 'path', { d: 'M' + path(pts), fill: 'none', stroke: color, 'stroke-width': 4, 'stroke-linejoin': 'round' });
  }
  function grid(top, bottom, steps, color) {
    for (var i = 0; i < steps; i++) {
      var y = Math.round(top + (bottom - top) * i / steps);
      add(svg, 'line', { x1: L, x2: Rt, y1: y, y2: y, stroke: color, 'stroke-width': 2, 'stroke-dasharray': '2 2' });
    }
  }
  function labels(list, x, anchor, top, bottom) {
    list.forEach(function (t, i) {
      add(svg, 'text', { x: x, y: Math.round(top + (bottom - top) * i / (list.length - 1)), 'text-anchor': anchor }, t);
    });
  }
  function axis(y) {
    add(svg, 'line', { x1: L - 1, x2: Rt + 1, y1: y, y2: y, stroke: '#6e7079', 'stroke-width': 2 });
    [['7月', 232], ['2021', 384], ['7月', 534], ['2022', 686], ['7月', 836]].forEach(function (t) {
      add(svg, 'line', { x1: t[1], x2: t[1], y1: y, y2: y + 9, stroke: '#6e7079', 'stroke-width': 2 });
      add(svg, 'text', { x: t[1], y: y + 27, 'text-anchor': 'middle', 'class': t[0].length > 2 ? 'year' : 'month' }, t[0]);
    });
  }
  var defs = add(svg, 'defs', {});
  [['cap', '#801b41', '#5c1d3c', 27, 228], ['yel', '#8a6216', '#7a5717', 430, 518], ['tor', '#482c5c', '#402a56', 330, 518], ['clr', '#7e1b41', '#5f1d3c', 470, 518]].forEach(function (g) {
    var lg = add(defs, 'linearGradient', { id: g[0], gradientUnits: 'userSpaceOnUse', x1: 0, x2: 0, y1: g[3], y2: g[4] });
    add(lg, 'stop', { offset: .7, 'stop-color': g[1] });
    add(lg, 'stop', { offset: 1, 'stop-color': g[2] });
  });

  // channels and capacity
  grid(27, 227, 5, '#353742');
  var capacity = noisy(parse('170,627 222,626 229,630 238,626 270,625 315,627 350,623 410,622 440,618 475,616 495,621 550,618 610,620 640,617 665,612 700,610 716,603 735,602 760,589 775,585 790,572 815,551 835,543 855,537 860,530 866,516 875,520 879,530 886,519 889,503 1047,512 1051,473 1080,469 1095,463 1118,460 1128,454 1135,457 1150,457 1160,451 1172,454 1180,462 1268,372 1310,347 1330,344 1337,335 1350,333 1370,337 1389,339'));
  area(capacity, 227, 'url(#cap)');
  line(capacity, '#e61c66');
  line(noisy(parse('170,565 173,559 182,560 190,555 200,558 222,560 226,573 232,562 236,558 260,557 300,560 312,564 335,556 360,553 400,556 437,553 443,558 475,554 497,562 515,558 555,559 600,554 650,545 680,532 698,534 718,518 732,518 745,509 775,495 790,475 800,468 816,448 850,430 900,418 1020,414 1047,412 1051,355 1065,349 1100,350 1105,354 1127,350 1132,361 1150,363 1160,359 1172,366 1180,380 1268,352 1315,353 1337,364 1341,374 1389,383')), '#ffbc0a');
  axis(228);
  labels(['100k', '80k', '60k', '40k', '20k', '0'], 91, 'end', 28, 228);
  labels(['6k', '5k', '4k', '3k', '2k', '1k', '0'], 987, 'start', 28, 228);
  add(svg, 'line', { x1: 750, x2: 750, y1: 27, y2: 227, stroke: '#b9bbc4', 'stroke-width': 2, 'stroke-dasharray': '7 4' });

  // nodes per network
  [['170,1152 175,1148 222,1145 226,1155 235,1143 300,1137 340,1133 420,1130 497,1129 515,1125 555,1120 615,1105 630,1094 645,1093 665,1075 680,1070 695,1070 715,1059 740,1055 770,1040 800,1022 840,990 855,982 867,968 880,985 887,990 890,977 897,977 1047,910 1052,889 1080,883 1100,884 1105,892 1127,889 1133,944 1160,943 1180,957 1268,945 1333,945 1340,956 1365,962 1389,963', 'url(#tor)', '#6b3a86'],
   ['170,1180 222,1178 226,1184 235,1177 300,1170 360,1167 430,1170 497,1172 560,1164 610,1161 630,1155 640,1161 660,1153 740,1156 800,1159 850,1158 855,1139 867,1135 880,1145 886,1150 889,1141 1047,1107 1053,1095 1080,1092 1100,1095 1105,1102 1127,1104 1133,1156 1180,1161 1268,1157 1389,1157', '#6a423f', '#b4703c'],
   ['170,1187 222,1186 226,1192 235,1183 300,1178 360,1176 430,1178 497,1180 560,1174 610,1171 630,1165 640,1170 660,1163 740,1166 850,1170 856,1152 867,1151 880,1160 886,1165 889,1157 1047,1125 1053,1113 1100,1113 1107,1122 1127,1125 1133,1177 1180,1181 1389,1181', 'url(#yel)', '#fdaa0a'],
   ['170,1224 560,1224 610,1222 630,1219 660,1216 740,1217 852,1219 856,1200 867,1198 887,1206 895,1203 1047,1170 1053,1157 1100,1157 1107,1166 1125,1168 1133,1223 1389,1222', 'url(#clr)', '#d81b60']
  ].forEach(function (s) {
    var pts = noisy(parse(s[0]));
    area(pts, 517, s[1]);
    line(pts, s[2]);
  });
  grid(318, 517, 7, 'rgba(190,190,200,.28)');
  axis(518);
  var nodes = ['21k', '18k', '15k', '12k', '9k', '6k', '3k', '0'];
  labels(nodes, 91, 'end', 318, 518);
  labels(nodes, 987, 'start', 318, 518);
  add(svg, 'text', { x: 539, y: 340, 'text-anchor': 'middle', 'class': 'subtitle' }, 'Nodes per network');
})();
```
